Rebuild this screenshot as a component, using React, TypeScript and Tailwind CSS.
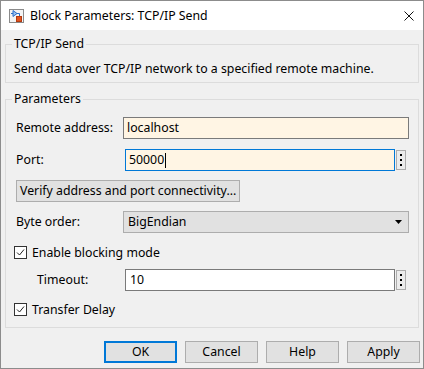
import React from "react";

function BlockIcon() {
  return (
    <svg width="15" height="14" viewBox="0 0 15 14" className="shrink-0">
      <rect x="0.5" y="0.5" width="14" height="13" fill="#f4f4f4" stroke="#8a8a8a" />
      <path d="M2 4.5 H4" stroke="#2a6fc9" strokeWidth="1" />
      <path d="M4 1.5 L8 4.5 L4 7.5 Z" fill="#9cc3f0" stroke="#2a6fc9" strokeWidth="1" />
      <path d="M8 4.5 H10.5 V7" stroke="#2a6fc9" strokeWidth="1" fill="none" />
      <rect x="7.5" y="7.5" width="5" height="5" fill="#e2531f" stroke="#b33a10" />
    </svg>
  );
}

function Dots() {
  return (
    <div className="ml-[1px] flex h-[20px] w-[10px] flex-col items-center justify-center gap-[3px] border border-[#adadad] bg-[#ececec]">
      <span className="h-[2px] w-[2px] bg-black" />
      <span className="h-[2px] w-[2px] bg-black" />
      <span className="h-[2px] w-[2px] bg-black" />
    </div>
  );
}

function Check({ label }: { label: string }) {
  return (
    <div className="flex h-[19px] items-center pl-[8px]">
      <div className="flex h-[13px] w-[13px] items-center justify-center border border-[#333333] bg-white">
        <svg width="9" height="9" viewBox="0 0 9 9">
          <path d="M1 4.5 L3.5 7 L8 1.5" stroke="#222" strokeWidth="1" fill="none" />
        </svg>
      </div>
      <span className="ml-[5px]">{label}</span>
    </div>
  );
}

export default function App() {
  return (
    <div className="flex h-[369px] w-[424px] flex-col border border-[#8c8c8c] bg-[#f0f0f0] font-['Noto_Sans',sans-serif] text-[12.3px] leading-[16px] text-black">
      {/* Title bar */}
      <div className="flex h-[29px] shrink-0 items-center bg-white pl-[8px]">
        <BlockIcon />
        <span className="ml-[6px]">Block Parameters: TCP/IP Send</span>
        <svg width="10" height="10" viewBox="0 0 10 10" className="ml-auto mr-[9px]">
          <path d="M0.5 0.5 L9.5 9.5 M9.5 0.5 L0.5 9.5" stroke="#111" strokeWidth="1" />
        </svg>
      </div>

      {/* Description */}
      <fieldset className="mx-[4px] mt-[6px] border border-[#dcdcdc] pb-[5px]">
        <legend className="ml-[6px] px-[2px]">TCP/IP Send</legend>
        <p className="ml-[8px] mt-[9px]">Send data over TCP/IP network to a specified remote machine.</p>
      </fieldset>

      {/* Parameters */}
      <fieldset className="mx-[4px] mt-[8px] border border-[#dcdcdc] pb-[8px]">
        <legend className="ml-[6px] px-[2px]">Parameters</legend>

        <div className="mt-[10px] flex h-[22px] items-center pl-[10px]">
          <span className="w-[107px]">Remote address:</span>
          <div className="flex h-[22px] w-[286px] items-center border border-[#7a7a7a] bg-[#fff5e4] pl-[3px]">localhost</div>
        </div>

        <div className="mt-[10px] flex h-[22px] items-center pl-[10px]">
          <span className="w-[109px]">Port:</span>
          <div className="flex h-[22px] w-[270px] items-center border border-[#0078d7] bg-[#fff5e4] pl-[3px]">
            50000<span className="ml-[1px] h-[15px] w-[1px] bg-black" />
          </div>
          <Dots />
        </div>

        <div className="mt-[9px] pl-[10px]">
          <button className="flex h-[22px] w-[224px] items-center border border-[#adadad] bg-[#e1e1e1] pl-[3px]">
            Verify address and port connectivity...
          </button>
        </div>

        <div className="mt-[9px] flex h-[22px] items-center pl-[10px]">
          <span className="w-[107px]">Byte order:</span>
          <div className="flex h-[22px] w-[286px] items-center border border-[#adadad] bg-[#e1e1e1] pl-[4px]">
            BigEndian
            <svg width="7" height="4" viewBox="0 0 7 4" className="ml-auto mr-[6px]">
              <path d="M0 0 H7 L3.5 4 Z" fill="#000" />
            </svg>
          </div>
        </div>

        <div className="mt-[10px]">
          <Check label="Enable blocking mode" />
        </div>

        <div className="mt-[7px] flex h-[22px] items-center pl-[31px]">
          <span className="w-[88px]">Timeout:</span>
          <div className="flex h-[22px] w-[270px] items-center border border-[#7a7a7a] bg-white pl-[4px]">10</div>
          <Dots />
        </div>

        <div className="mt-[9px]">
          <Check label="Transfer Delay" />
        </div>
      </fieldset>

      {/* Buttons */}
      <div className="mr-[3px] mt-[13px] flex justify-end gap-[8px]">
        <button className="h-[22px] w-[73px] border-2 border-[#0078d7] bg-[#e1e1e1]">OK</button>
        <button className="h-[22px] w-[73px] border border-[#adadad] bg-[#e1e1e1]">Cancel</button>
        <button className="h-[22px] w-[73px] border border-[#adadad] bg-[#e1e1e1]">Help</button>
        <button className="h-[22px] w-[73px] border border-[#adadad] bg-[#e1e1e1]">Apply</button>
      </div>
    </div>
  );
}
